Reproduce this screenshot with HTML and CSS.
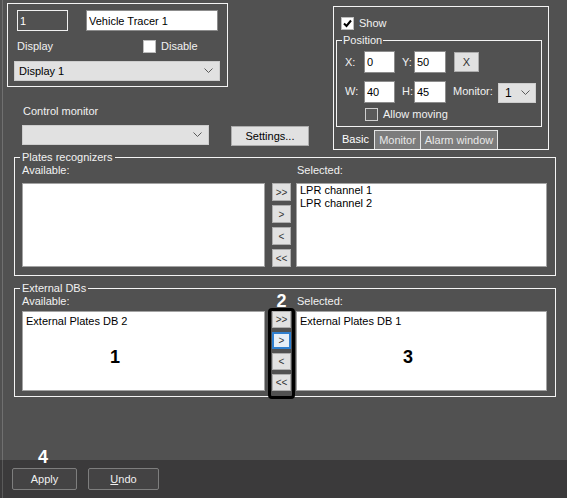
FILE: index.html
```html
<!DOCTYPE html>
<html lang="en">
<head>
  <meta charset="UTF-8" />
  <title>Vehicle Tracer settings</title>
  <link rel="stylesheet" href="styles.css">
</head>
<body>
  <div class="main">
    <div class="top">
      <!-- object + display -->
      <div class="left-col">
        <div class="box obj-box">
          <div class="row">
            <input class="inp inp-id" value="1" />
            <input class="inp inp-name" value="Vehicle Tracer 1" />
          </div>
          <div class="row row-display">
            <span class="lbl-display">Display</span>
            <span class="chk"></span><span class="chk-text">Disable</span>
          </div>
          <div class="combo combo-display">
            <span>Display 1</span>
            <svg class="chev" width="9" height="6" viewBox="0 0 9 6"><polyline points="0.5,0.5 4.5,4.5 8.5,0.5" /></svg>
          </div>
        </div>

        <div class="cm-label">Control monitor</div>
        <div class="row cm-row">
          <div class="combo combo-cm">
            <span></span>
            <svg class="chev" width="9" height="6" viewBox="0 0 9 6"><polyline points="0.5,0.5 4.5,4.5 8.5,0.5" /></svg>
          </div>
          <button class="btn btn-settings">Settings...</button>
        </div>
      </div>

      <!-- window on monitor -->
      <div class="box disp-box">
        <div class="row show-row">
          <span class="chk"><svg width="11" height="11" viewBox="0 0 11 11"><polyline points="2,5.5 4.5,8 9,2.5" /></svg></span>
          <span class="chk-text">Show</span>
        </div>
        <fieldset class="group pos-group">
          <legend>Position</legend>
          <div class="pos-body">
            <div class="row">
              <span class="c-lbl">X:</span><input class="inp inp-c1" value="0" />
              <span class="c-lbl c-lbl2">Y:</span><input class="inp inp-c2" value="50" />
              <button class="btn btn-x">X</button>
            </div>
            <div class="row row-w">
              <span class="c-lbl">W:</span><input class="inp inp-c1" value="40" />
              <span class="c-lbl c-lbl2">H:</span><input class="inp inp-c2" value="45" />
              <span class="mon-lbl">Monitor:</span>
              <div class="combo combo-mon">
                <span>1</span>
                <svg class="chev" width="9" height="6" viewBox="0 0 9 6"><polyline points="0.5,0.5 4.5,4.5 8.5,0.5" /></svg>
              </div>
            </div>
            <div class="row row-allow">
              <span class="chk chk-off"></span><span class="chk-text">Allow moving</span>
            </div>
          </div>
        </fieldset>
        <div class="tabs">
          <span class="tab tab-basic">Basic</span>
          <span class="tab tab-monitor">Monitor</span>
          <span class="tab tab-alarm">Alarm window</span>
        </div>
      </div>
    </div>

    <!-- Plates recognizers -->
    <fieldset class="group wide plates">
      <legend>Plates recognizers</legend>
      <div class="dual">
        <div>Available:</div>
        <div></div>
        <div class="sel-lbl">Selected:</div>
        <div class="list"></div>
        <div class="movers">
          <button class="mv">&gt;&gt;</button>
          <button class="mv">&gt;</button>
          <button class="mv">&lt;</button>
          <button class="mv">&lt;&lt;</button>
        </div>
        <div class="list">
          <div>LPR channel 1</div>
          <div>LPR channel 2</div>
        </div>
      </div>
    </fieldset>

    <!-- External DBs -->
    <fieldset class="group wide ext">
      <legend>External DBs</legend>
      <div class="dual dual-ext">
        <div>Available:</div>
        <div class="note note-2">2</div>
        <div class="sel-lbl">Selected:</div>
        <div class="list list-pad">
          <div>External Plates DB 2</div>
          <div class="note note-1">1</div>
        </div>
        <div class="movers">
          <button class="mv">&gt;&gt;</button>
          <button class="mv mv-active">&gt;</button>
          <button class="mv">&lt;</button>
          <button class="mv">&lt;&lt;</button>
          <span class="frame"></span>
        </div>
        <div class="list list-pad">
          <div>External Plates DB 1</div>
          <div class="note note-3">3</div>
        </div>
      </div>
    </fieldset>
  </div>

  <div class="footer">
    <span class="note note-4">4</span>
    <button class="fbtn fbtn-apply">Apply</button>
    <button class="fbtn fbtn-undo"><u>U</u>ndo</button>
  </div>
</body>
</html>
```

FILE: styles.css
```css
html, body {
  margin: 0;
  padding: 0;
}
body {
  width: 567px;
  height: 498px;
  overflow: hidden;
  font-family: "Liberation Sans", Arial, sans-serif;
  font-size: 11px;
  line-height: 13px;
  color: #f2f2f2;
  background: #515151;
}
button, input {
  font-family: inherit;
  font-size: 11px;
  margin: 0;
}
.main {
  height: 460px;
  background: linear-gradient(90deg, #515151 2px, #707070 2px, #707070 3px, #515151 3px);
  overflow: hidden;
}
.row {
  display: flex;
  align-items: center;
}
.row > * {
  flex-shrink: 0;
}
.top {
  display: flex;
  align-items: flex-start;
  padding-left: 7px;
}
.box {
  box-sizing: border-box;
  border: 1px solid #f4f4f4;
}

/* left column */
.left-col {
  width: 221px;
  flex-shrink: 0;
  margin-top: 3px;
}
.obj-box {
  height: 84px;
  padding: 6px 0 0 6px;
}
.inp {
  box-sizing: border-box;
  height: 21px;
  padding: 0 2px;
  border: 1px solid #8c8c8c;
  background: #fff;
  color: #000;
  outline: none;
}
.inp-id {
  width: 51px;
  margin-left: 3px;
  background: transparent;
  border-color: #f0f0f0;
  color: #fff;
}
.inp-name {
  width: 132px;
  margin-left: 18px;
}
.row-display {
  height: 13px;
  margin-top: 9px;
}
.lbl-display {
  width: 126px;
  margin-left: 3px;
}
.chk {
  box-sizing: border-box;
  width: 13px;
  height: 13px;
  border: 1px solid #bdbdbd;
  background: #fff;
  display: flex;
  align-items: center;
  justify-content: center;
}
.chk polyline {
  fill: none;
  stroke: #000;
  stroke-width: 2;
}
.chk-off {
  background: #5a5a5a;
  border-color: #cfcfcf;
}
.chk-text {
  margin-left: 5px;
}
.combo {
  box-sizing: border-box;
  display: flex;
  align-items: center;
  justify-content: space-between;
  height: 20px;
  padding: 0 6px 0 4px;
  background: #e1e1e1;
  border: 1px solid #cdcdcd;
  color: #000;
}
.chev polyline {
  fill: none;
  stroke: #5a5a5a;
  stroke-width: 1;
}
.combo-display {
  width: 206px;
  margin-top: 8px;
}
.cm-label {
  margin: 18px 0 0 16px;
}
.cm-row {
  align-items: flex-start;
  margin-top: 7px;
}
.combo-cm {
  width: 187px;
  margin-left: 15px;
}
.btn {
  box-sizing: border-box;
  height: 20px;
  padding: 0;
  background: #e1e1e1;
  border: 1px solid #adadad;
  color: #000;
}
.btn-settings {
  width: 78px;
  margin: 1px 0 0 22px;
}

/* right box */
.disp-box {
  display: flex;
  flex-direction: column;
  width: 216px;
  height: 144px;
  margin: 6px 0 0 105px;
  padding: 10px 0 0 2px;
}
.show-row {
  height: 13px;
  margin-left: 5px;
}
.group {
  margin: 0;
  padding: 0;
  min-width: 0;
  border: 1px solid #f4f4f4;
}
.group legend {
  padding: 0 2px;
  margin-left: -2px;
  line-height: 13px;
}
.pos-group {
  box-sizing: border-box;
  width: 206px;
  margin-top: 4px;
}
.pos-group legend {
  padding: 0 1px;
  margin-left: 5px;
}
.pos-body {
  padding: 4px 0 5px 8px;
}
.c-lbl {
  width: 19px;
}
.c-lbl2 {
  width: 12px;
  margin-left: 7px;
}
.inp-c1, .inp-c2 {
  height: 22px;
  width: 31px;
}
.inp-c2 {
  width: 32px;
}
.btn-x {
  width: 25px;
  margin-left: 8px;
  color: #333;
}
.row-w {
  margin-top: 7px;
}
.mon-lbl {
  width: 45px;
  margin-left: 7px;
}
.combo-mon {
  width: 38px;
  margin-top: 3px;
  padding: 0 5px 0 6px;
  align-self: flex-start;
  font-size: 12px;
}
.row-allow {
  height: 13px;
  margin: 5px 0 0 20px;
}
.tabs {
  display: flex;
  margin: auto 0 0 5px;
  height: 19px;
}
.tab {
  box-sizing: border-box;
  height: 19px;
  line-height: 18px;
  text-align: center;
  border: 1px solid #e4e4e4;
  border-bottom: none;
  background: #7c7c7c;
  color: #e8e8e8;
}
.tab-basic {
  width: 33px;
  border: none;
  background: none;
  color: #fff;
  text-align: left;
  padding-left: 1px;
}
.tab-monitor {
  width: 47px;
}
.tab-alarm {
  width: 77px;
  border-left: none;
}

/* selection panels */
.wide {
  box-sizing: border-box;
  width: 542px;
  margin-left: 14px;
}
.plates {
  margin-top: 1px;
  padding: 0 8px 8px 7px;
}
.ext {
  margin-top: 6px;
  padding: 0 8px 5px 7px;
}
.dual {
  display: grid;
  grid-template-columns: 243px 31px 251px;
  grid-template-rows: 13px 84px;
  row-gap: 6px;
}
.dual-ext {
  grid-template-rows: 13px 80px;
  row-gap: 3px;
}
.sel-lbl {
  padding-left: 1px;
}
.list {
  box-sizing: border-box;
  background: #fff;
  border: 1px solid #a3a3a3;
  color: #000;
  padding: 0 3px;
}
.list-pad {
  padding-top: 3px;
}
.movers {
  position: relative;
  display: flex;
  flex-direction: column;
  justify-content: space-between;
  width: 19px;
  margin-left: 7px;
}
.mv {
  box-sizing: border-box;
  height: 18px;
  width: 19px;
  padding: 0;
  font-size: 10px;
  background: #e1e1e1;
  border: 1px solid #adadad;
  color: #333;
}
.dual-ext .mv {
  height: 17px;
}
.mv-active {
  border: 2px solid #2f7fcf;
  background: #e6eef7;
}
.frame {
  position: absolute;
  left: -4px;
  right: -4px;
  top: -3px;
  bottom: -8px;
  border: 3px solid #000;
  border-radius: 4px;
}

/* annotation numbers */
.note {
  font-size: 18px;
  font-weight: bold;
  line-height: 18px;
}
.note-2 {
  color: #fff;
  width: 19px;
  margin: -3px 0 0 7px;
  text-align: center;
}
.note-1 {
  margin: 20px 0 0 84px;
}
.note-3 {
  margin: 20px 0 0 103px;
}

/* footer */
.footer {
  position: relative;
  display: flex;
  height: 38px;
  box-sizing: border-box;
  padding: 8px 0 0 12px;
  background: linear-gradient(90deg, #3b3a3b 2px, #5a5a5a 2px, #5a5a5a 3px, #3b3a3b 3px);
}
.note-4 {
  position: absolute;
  left: 38px;
  top: -12px;
  color: #fff;
}
.fbtn {
  box-sizing: border-box;
  height: 22px;
  padding: 0;
  background: #444344;
  border: 1px solid #7e7e7e;
  border-radius: 2px;
  color: #f0f0f0;
}
.fbtn-apply {
  width: 65px;
}
.fbtn-undo {
  width: 71px;
  margin-left: 11px;
}
```
